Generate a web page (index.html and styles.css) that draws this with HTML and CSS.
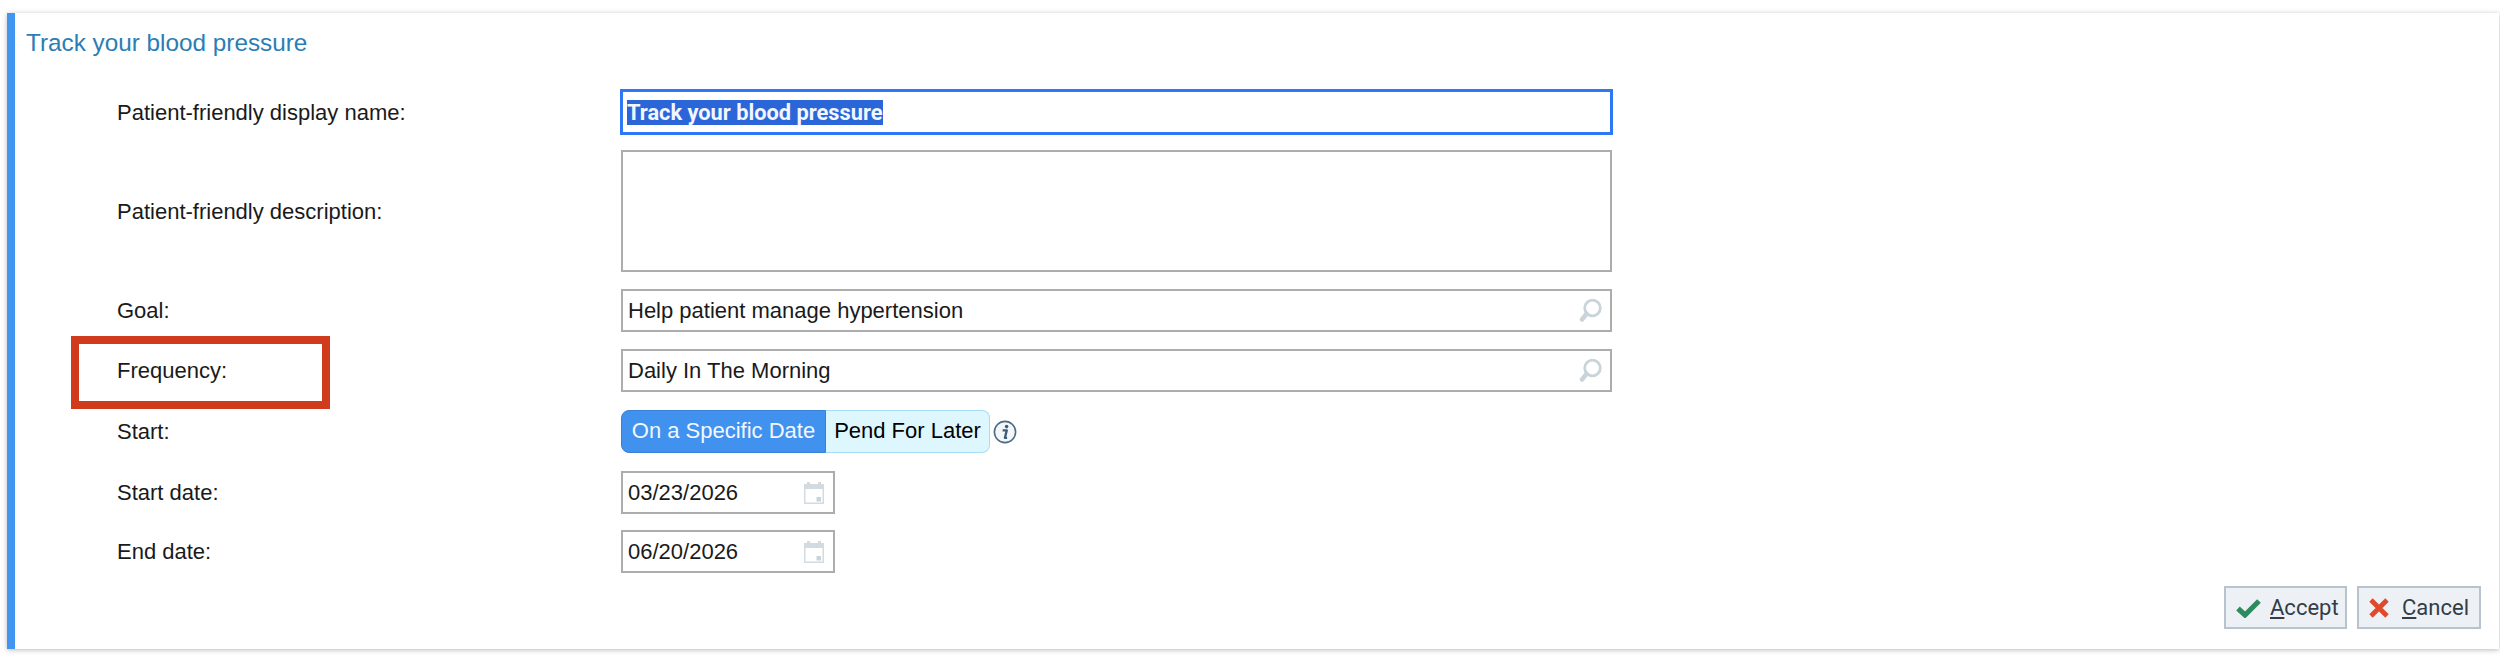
FILE: index.html
```html
<!DOCTYPE html>
<html lang="en">
<head>
<meta charset="utf-8">
<title>Track your blood pressure</title>
<link rel="stylesheet" href="styles.css">
</head>
<body>
<main class="card">
  <h1 class="title">Track your blood pressure</h1>
  <form class="form">
    <div class="row row-name">
      <label class="label label-low">Patient-friendly display name:</label>
      <div class="field field-focus"><span class="selected">Track your blood pressure</span></div>
    </div>
    <div class="row row-desc">
      <label class="label label-low">Patient-friendly description:</label>
      <div class="field field-area"></div>
    </div>
    <div class="row">
      <label class="label">Goal:</label>
      <div class="field"><span class="value">Help patient manage hypertension</span>
        <svg class="icon-search" viewBox="0 0 24 24" width="24" height="24"><circle cx="13.5" cy="9" r="7.8" fill="none" stroke="#c9d3da" stroke-width="2.8"/><path d="M7.5 15 3 20.5" stroke="#c9d3da" stroke-width="4.4" stroke-linecap="round"/></svg>
      </div>
    </div>
    <div class="row">
      <label class="label">Frequency:</label>
      <div class="field"><span class="value">Daily In The Morning</span>
        <svg class="icon-search" viewBox="0 0 24 24" width="24" height="24"><circle cx="13.5" cy="9" r="7.8" fill="none" stroke="#c9d3da" stroke-width="2.8"/><path d="M7.5 15 3 20.5" stroke="#c9d3da" stroke-width="4.4" stroke-linecap="round"/></svg>
      </div>
    </div>
    <div class="row row-start">
      <label class="label">Start:</label>
      <div class="toggle-wrap">
        <div class="toggle">
          <span class="toggle-on">On a Specific Date</span><span class="toggle-off">Pend For Later</span>
        </div>
        <svg class="icon-info" viewBox="0 0 24 24" width="24" height="24"><circle cx="12" cy="12" r="10.6" fill="#f4f7fa" stroke="#4c6b85" stroke-width="1.6"/><circle cx="13.6" cy="6.6" r="1.8" fill="#3d5c78"/><path d="M9.6 10.4h4.2l-1.9 7.4h2.2" fill="none" stroke="#3d5c78" stroke-width="2.3" stroke-linejoin="round"/></svg>
      </div>
    </div>
    <div class="row row-from">
      <label class="label">Start date:</label>
      <div class="field field-date"><span class="value">03/23/2026</span>
        <svg class="icon-cal" viewBox="0 0 20 22" width="20" height="22"><path d="M0 2h20v20H0z" fill="#d3dbe1"/><path d="M3 0h3v3H3zM14 0h3v3h-3z" fill="#d3dbe1"/><path d="M1.5 7h17v13.5h-17z" fill="#fff"/><path d="M12.5 15h4.5v4.5h-4.5z" fill="#c9d3da"/></svg>
      </div>
    </div>
    <div class="row row-to">
      <label class="label">End date:</label>
      <div class="field field-date"><span class="value">06/20/2026</span>
        <svg class="icon-cal" viewBox="0 0 20 22" width="20" height="22"><path d="M0 2h20v20H0z" fill="#d3dbe1"/><path d="M3 0h3v3H3zM14 0h3v3h-3z" fill="#d3dbe1"/><path d="M1.5 7h17v13.5h-17z" fill="#fff"/><path d="M12.5 15h4.5v4.5h-4.5z" fill="#c9d3da"/></svg>
      </div>
    </div>
  </form>
  <div class="actions">
    <button type="button" class="btn btn-accept">
      <svg viewBox="0 0 25 20" width="25" height="20"><path d="M2 10.5l7 6.5L23 3" fill="none" stroke="#2e8b5f" stroke-width="5.2"/></svg>
      <span><u>A</u>ccept</span>
    </button>
    <button type="button" class="btn btn-cancel">
      <svg viewBox="0 0 20 20" width="20" height="20"><path d="M2 2l16 16M18 2 2 18" fill="none" stroke="#df4a2a" stroke-width="4.8"/></svg>
      <span><u>C</u>ancel</span>
    </button>
  </div>
  <div class="highlight"></div>
</main>
</body>
</html>
```

FILE: styles.css
```css
* { box-sizing: border-box; }
html, body { margin: 0; height: 659px; overflow: hidden; background: #fff; }
body { padding: 13px 1px 10px 7px; font-family: "Liberation Sans", Arial, sans-serif; font-size: 22px; color: #1a1a1a; }
.card {
  position: relative;
  height: 636px;
  background: #fff;
  border-left: 8px solid #4295f0;
  box-shadow: 0 1px 5px rgba(0, 0, 0, .28);
  padding: 17px 0 0 11px;
}
.title { margin: 0; font-size: 24.3px; line-height: 26px; font-weight: 400; color: #2a7db5; height: 59px; }
.form { display: flex; flex-direction: column; gap: 17px; }
.row { display: flex; align-items: center; height: 43px; }
.row-name { height: 46px; margin-bottom: -2px; }
.row-desc { height: 122px; }
.row-start { margin-top: 1px; }
.row-from { margin-top: 1px; }
.row-to { margin-top: -1px; }
.label { width: 595px; padding-left: 91px; flex: none; }
.label-low { padding-top: 2px; }
.field {
  flex: none;
  width: 991px;
  height: 43px;
  border: 2px solid #adadad;
  background: #fff;
  display: flex;
  align-items: center;
  justify-content: space-between;
  padding: 0 5px;
}
.field-focus { width: 993px; height: 46px; margin-left: -1px; border: 3px solid #2f78f5; padding: 0 4px; font: 700 21.8px Roboto, sans-serif; }
.selected { background: #2b66d9; color: #f2f6ff; line-height: 25px; }
.field-area { height: 122px; }
.field-date { width: 214px; }
.icon-search { margin-right: 2px; }
.icon-cal { margin-right: 4px; }
.toggle-wrap { display: flex; align-items: center; gap: 3px; }
.toggle { display: flex; height: 43px; line-height: 40px; }
.toggle-on { width: 205px; background: #4191ee; color: #f2f8ff; text-align: center; border: 1px solid #3a80d8; border-radius: 8px 0 0 8px; }
.toggle-off { width: 164px; background: #def7fe; color: #000; text-align: center; border: 1px solid #a9dcf2; border-left: 0; border-radius: 0 8px 8px 0; }
.actions { position: absolute; right: 18px; bottom: 20px; display: flex; gap: 10px; }
.btn {
  height: 43px;
  padding: 0 0 0 10px;
  display: flex;
  align-items: center;
  gap: 9px;
  background: #edf1f5;
  border: 2px solid #b7c3ce;
  font: 22px Roboto, sans-serif;
  color: #333d47;
}
.btn-accept { width: 123px; }
.btn-cancel { width: 124px; gap: 13px; }
.highlight { position: absolute; left: 56px; top: 323px; width: 259px; height: 73px; border: 8px solid #d03b1e; }
```
